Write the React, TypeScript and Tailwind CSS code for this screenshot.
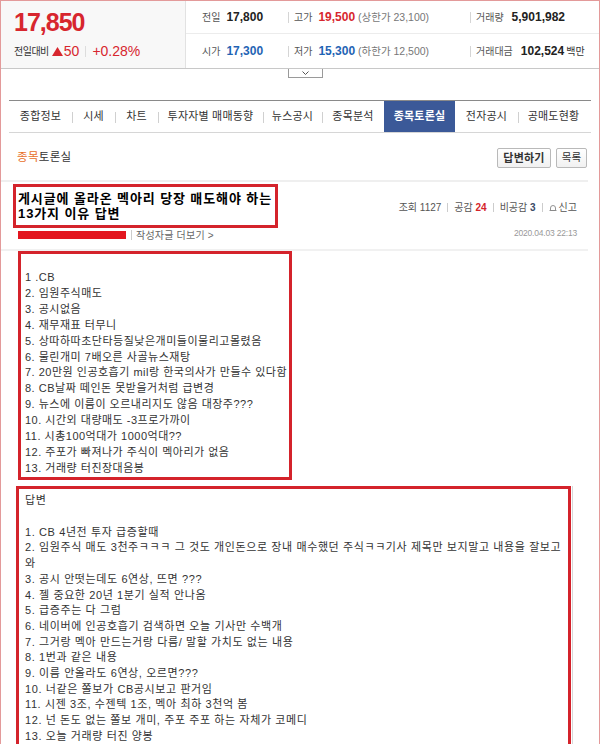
const tabs = [
  { label: "종합정보", w: "w-[63px]", sep: false },
  { label: "시세", w: "w-[43px]", sep: true },
  { label: "차트", w: "w-[43px]", sep: true },
  { label: "투자자별 매매동향", w: "w-[105px]", sep: true },
  { label: "뉴스공시", w: "w-[59px]", sep: true },
  { label: "종목분석", w: "w-[62px]", sep: true },
  { label: "종목토론실", w: "w-[71px]", sep: false, active: true },
  { label: "전자공시", w: "w-[63px]", sep: false },
  { label: "공매도현황", w: "w-[71px]", sep: true },
];

const reasons = [
  "1 .CB",
  "2. 임원주식매도",
  "3. 공시없음",
  "4. 재무재표 터무니",
  "5. 상따하따초단타등질낮은개미들이물리고몰렸음",
  "6. 물린개미 7배오른 사골뉴스재탕",
  "7. 20만원 인공호흡기 mil랑 한국의사가 만들수 있다함",
  "8. CB날짜 떼인돈 못받을거처럼 급변경",
  "9. 뉴스에 이름이 오르내리지도 않음 대장주???",
  "10. 시간외 대량매도 -3프로가까이",
  "11. 시총100억대가 1000억대??",
  "12. 주포가 빠져나가 주식이 멕아리가 없음",
  "13. 거래량 터진장대음봉",
];

const answers = [
  "1. CB 4년전 투자 급증할때",
  "2. 임원주식 매도 3천주ㅋㅋㅋ 그 것도 개인돈으로 장내 매수했던 주식ㅋㅋ기사 제목만 보지말고 내용을 잘보고",
  "와",
  "3. 공시 안떳는데도 6연상, 뜨면 ???",
  "4. 젤 중요한 20년 1분기 실적 안나옴",
  "5. 급증주는 다 그럼",
  "6. 네이버에 인공호흡기 검색하면 오늘 기사만 수백개",
  "7. 그거랑 멕아 만드는거랑 다름/ 말할 가치도 없는 내용",
  "8. 1번과 같은 내용",
  "9. 이름 안올라도 6연상, 오르면???",
  "10. 너같은 쫄보가 CB공시보고 판거임",
  "11. 시젠 3조, 수젠텍 1조, 멕아 최하 3천억 봄",
  "12. 넌 돈도 없는 쫄보 개미, 주포 주포 하는 자체가 코메디",
  "13. 오늘 거래량 터진 양봉",
];

function Sep() {
  return <span className="w-px h-[11px] bg-[#d5d5d5]" />;
}

function PriceBox() {
  return (
    <div className="flex h-[68px] border-b border-[#c8c8c8]">
      <div className="w-[185px] shrink-0 bg-[#f8f8f8] border-r border-[#e2e2e2] pl-[13px] pt-[8px]">
        <div className="text-[25px] leading-[26px] font-bold tracking-[-1px] text-[#d7262e]">17,850</div>
        <div className="flex items-center mt-[8px] h-[16px]">
          <span className="text-[10px] tracking-[-0.5px] text-[#333]">전일대비</span>
          <svg width="11" height="9" viewBox="0 0 11 9" className="ml-[3px]">
            <path d="M5.5 0 L11 9 L0 9 Z" fill="#d7262e" />
          </svg>
          <span className="text-[14px] text-[#d7262e] ml-[1px]">50</span>
          <span className="w-px h-[11px] bg-[#ddd] mx-[6px]" />
          <span className="text-[14px] text-[#d7262e]">+0.28%</span>
        </div>
      </div>
      <div className="flex-1 flex flex-col">
        <div className="flex items-center h-[33px] border-b border-[#ececec] text-[10px] text-[#555]">
          <div className="w-[102px] pl-[16px] flex items-center gap-[6px]">
            <span>전일</span>
            <b className="text-[12px] text-[#222]">17,800</b>
          </div>
          <Sep />
          <div className="w-[181px] pl-[5px] flex items-center gap-[6px]">
            <span>고가</span>
            <span>
              <b className="text-[12px] text-[#d7262e]">19,500</b>
              <span className="text-[10.5px] text-[#777] ml-[3px]">(상한가 23,100)</span>
            </span>
          </div>
          <Sep />
          <div className="pl-[5px] flex items-center gap-[8px]">
            <span>거래량</span>
            <b className="text-[12px] text-[#222]">5,901,982</b>
          </div>
        </div>
        <div className="flex items-center flex-1 text-[10px] text-[#555]">
          <div className="w-[102px] pl-[16px] flex items-center gap-[6px]">
            <span>시가</span>
            <b className="text-[12px] text-[#1f64b4]">17,300</b>
          </div>
          <Sep />
          <div className="w-[181px] pl-[5px] flex items-center gap-[6px]">
            <span>저가</span>
            <span>
              <b className="text-[12px] text-[#1f64b4]">15,300</b>
              <span className="text-[10.5px] text-[#777] ml-[3px]">(하한가 12,500)</span>
            </span>
          </div>
          <Sep />
          <div className="pl-[5px] flex items-center gap-[8px]">
            <span>거래대금</span>
            <span>
              <b className="text-[12px] text-[#222]">102,524</b>
              <span className="text-[10px] text-[#333] ml-[2px]">백만</span>
            </span>
          </div>
        </div>
      </div>
    </div>
  );
}

function Tabs() {
  return (
    <div className="mx-[8px] mt-[22px] flex h-[33px] border-t border-[#8a8a8a] border-b border-b-[#d6d6d6]">
      {tabs.map((t) => (
        <div key={t.label} className={`${t.w} relative flex items-center justify-center text-[11px] tracking-[0.2px] ${t.active ? "bg-[#3b5998] text-white font-bold" : "text-[#333]"}`}>
          {t.sep && <span className="absolute left-0 top-[11px] w-px h-[11px] bg-[#d0d0d0]" />}
          {t.label}
        </div>
      ))}
    </div>
  );
}

export default function App() {
  return (
    <div className="w-[600px] h-[744px] overflow-hidden bg-white border-t border-x border-[#e39a9a] font-['Liberation_Sans','Noto_Sans_CJK_KR',sans-serif]">
      <PriceBox />
      <div className="ml-[287px] w-[35px] h-[9px] border border-t-0 border-[#9a9a9a] bg-white flex items-center justify-center">
        <svg width="7" height="4" viewBox="0 0 7 4">
          <path d="M0.5 0.5 L3.5 3.5 L6.5 0.5" fill="none" stroke="#555" strokeWidth="1" />
        </svg>
      </div>
      <Tabs />

      <div className="flex items-center justify-between mt-[15px] h-[20px] pl-[16px] pr-[12px]">
        <div className="text-[11.5px] text-[#333] tracking-[0.3px]">
          <span className="text-[#e8702a]">종목</span>토론실
        </div>
        <div className="flex gap-[5px]">
          <button className="w-[54px] h-[20px] border border-[#b9b9b9] rounded-[2px] bg-gradient-to-b from-white to-[#f1f1f1] text-[11px] font-bold text-[#333] tracking-[0.2px]">답변하기</button>
          <button className="w-[31px] h-[20px] border border-[#b9b9b9] rounded-[2px] bg-gradient-to-b from-white to-[#f1f1f1] text-[10.5px] text-[#333]">목록</button>
        </div>
      </div>

      <div className="mt-[12px] mr-[11px] h-[2px] bg-[#efefef]" />

      <div className="flex justify-between mr-[22px] h-[67px]">
        <div className="flex flex-col">
          <div className="ml-[12px] mt-[2px] w-[265px] h-[44px] border-[3px] border-[#d4232b] pl-[2px] pt-[4px]">
            <div className="text-[13px] leading-[15px] font-bold text-black tracking-[0.9px] whitespace-nowrap">
              게시글에 올라온 멕아리 당장 매도해야 하는
              <br />
              13가지 이유 답변
            </div>
          </div>
          <div className="flex items-center ml-[17px] mt-[2px] h-[10px]">
            <span className="w-[108px] h-[8px] bg-[#e3161f]" />
            <span className="w-px h-[10px] bg-[#ccc] ml-[5px]" />
            <span className="ml-[4px] text-[10px] text-[#666] tracking-[0.2px]">작성자글 더보기 &gt;</span>
          </div>
        </div>
        <div className="flex flex-col items-end justify-between pt-[18px] pb-[9px]">
          <div className="flex items-center gap-[6px] text-[10px] text-[#555]">
            <span>조회 1127</span>
            <span className="w-px h-[9px] bg-[#ccc]" />
            <span>
              공감 <b className="text-[#d4232b]">24</b>
            </span>
            <span className="w-px h-[9px] bg-[#ccc]" />
            <span>
              비공감 <b className="text-[#3b4a66]">3</b>
            </span>
            <span className="w-px h-[9px] bg-[#ccc]" />
            <span className="flex items-center gap-[2px]">
              <svg width="8" height="8" viewBox="0 0 8 8">
                <path d="M1.5 6.5 L1.5 4 A2.5 2.5 0 0 1 6.5 4 L6.5 6.5 Z M0.5 6.5 L7.5 6.5" fill="none" stroke="#888" strokeWidth="0.9" />
              </svg>
              신고
            </span>
          </div>
          <div className="text-[8.5px] text-[#999] tracking-[-0.2px]">2020.04.03 22:13</div>
        </div>
      </div>

      <div className="mr-[11px] h-[2px] bg-[#f1f1f1]" />

      <div className="ml-[17px] w-[274px] h-[229px] border-[3px] border-[#d4232b] pl-[4px] pt-[16px]">
        {reasons.map((r) => (
          <div key={r} className="text-[11px] leading-[15.9px] text-[#333] whitespace-nowrap tracking-[0.5px]">{r}</div>
        ))}
      </div>

      <div className="mt-[6px] flex">
        <div className="ml-[15px] w-[555px] h-[270px] border-[3px] border-[#d4232b] pl-[6px] pt-[4px]">
          <div className="text-[11px] leading-[15.7px] text-[#333] tracking-[0.6px]">답변</div>
          <div className="h-[16px]" />
          {answers.map((a) => (
            <div key={a} className="text-[11px] leading-[15.7px] text-[#333] whitespace-nowrap tracking-[0.6px]">{a}</div>
          ))}
        </div>
        <div className="ml-[1px] w-px h-[270px] bg-[#d8d8d8]" />
      </div>
    </div>
  );
}
